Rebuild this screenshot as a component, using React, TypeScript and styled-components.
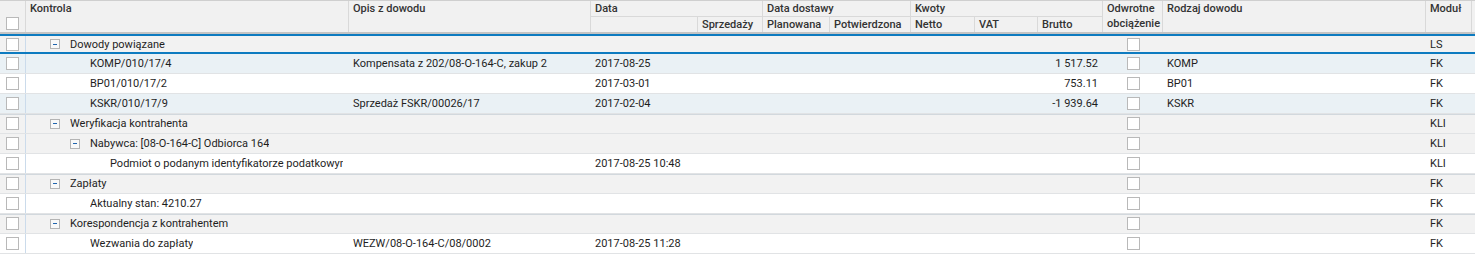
import React from 'react';
import styled, { createGlobalStyle, css } from 'styled-components';

const GlobalStyle = createGlobalStyle`
  html, body {
    margin: 0;
    padding: 0;
    background: #ffffff;
  }
  body {
    font-family: Roboto, "Liberation Sans", Arial, sans-serif;
    font-size: 11px;
    color: #1e1e1e;
  }
`;

const COLUMNS = '26px 323px 242px 107px 65px 67px 81px 64px 63px 65px 60px 263px 46px 1fr';

const Grid = styled.div`
  width: 1475px;
  overflow: hidden;
`;

const Header = styled.div`
  display: grid;
  grid-template-columns: ${COLUMNS};
  grid-template-rows: 16px 15px;
  background: #f1f1f1;
  border-top: 1px solid #cfcfcf;
  border-bottom: 2px solid #c4c4c4;
`;

const HeadCell = styled.div<{ $col: string; $row: string; $underline?: boolean }>`
  grid-column: ${p => p.$col};
  grid-row: ${p => p.$row};
  border-right: 1px solid #d9d9d9;
  ${p => p.$underline && css`border-bottom: 1px solid #d9d9d9;`}
  padding: 0 4px;
  line-height: 15px;
  font-weight: 500;
  color: #333;
  white-space: nowrap;
  overflow: hidden;
`;

const HeadCheckCell = styled(HeadCell)`
  display: flex;
  align-items: flex-end;
  justify-content: center;
  padding: 0 0 2px;
`;

const Row = styled.div<{ $group: boolean; $top: boolean; $tint: boolean; $selected: boolean }>`
  display: grid;
  grid-template-columns: ${COLUMNS};
  height: 19px;
  align-items: center;
  border-bottom: 1px solid #e1e3e5;
  background: ${p => (p.$group ? '#f2f2f2' : p.$tint ? '#eaf1f5' : '#ffffff')};
  ${p => p.$top && !p.$selected && css`box-shadow: inset 0 1px 0 #d2d8dd;`}
  ${p =>
    p.$selected &&
    css`
      height: 16px;
      border-top: 2px solid #0d7bc0;
      border-bottom: 2px solid #0d7bc0;
    `}
`;

const Cell = styled.div<{ $right?: boolean; $span?: number }>`
  height: 100%;
  display: flex;
  align-items: center;
  justify-content: ${p => (p.$right ? 'flex-end' : 'flex-start')};
  ${p => p.$span && css`grid-column: span ${p.$span};`}
  padding: 0 5px 0 4px;
  white-space: nowrap;
  overflow: hidden;
  min-width: 0;
`;

const CheckCell = styled.div<{ $divider?: boolean }>`
  height: 100%;
  display: flex;
  align-items: center;
  justify-content: center;
  ${p => p.$divider && css`border-right: 1px solid #cbdbeb;`}
`;

const Box = styled.span`
  display: inline-block;
  width: 11px;
  height: 11px;
  border: 1px solid #b9b9b9;
  background: #fff;
`;

// tree column: expander or spacer, then the label, indented 20px per level
const TreeCell = styled(Cell)<{ $depth: number }>`
  padding-left: ${p => 24 + p.$depth * 20}px;
  padding-right: 6px;
`;

const Label = styled.span`
  min-width: 0;
  overflow: hidden;
  white-space: nowrap;
`;

const Expander = styled.span`
  position: relative;
  flex: none;
  width: 8px;
  height: 8px;
  border: 1px solid #b4b4b4;
  background: #f8f8f8;
  margin-right: 10px;

  &::after {
    content: '';
    position: absolute;
    left: 2px;
    top: 3.5px;
    width: 4px;
    height: 1px;
    background: #1f64ad;
  }
`;

const Spacer = styled.span`
  flex: none;
  width: 20px;
`;

type Item = {
  group?: boolean;
  depth: number;
  label: string;
  opis?: string;
  data?: string;
  brutto?: string;
  rodzaj?: string;
  modul: string;
  tint?: boolean;
  selected?: boolean;
};

const rows: Item[] = [
  { group: true, depth: 0, label: 'Dowody powiązane', modul: 'LS', selected: true },
  { depth: 1, label: 'KOMP/010/17/4', opis: 'Kompensata z 202/08-O-164-C, zakup 2', data: '2017-08-25', brutto: '1 517.52', rodzaj: 'KOMP', modul: 'FK', tint: true },
  { depth: 1, label: 'BP01/010/17/2', data: '2017-03-01', brutto: '753.11', rodzaj: 'BP01', modul: 'FK' },
  { depth: 1, label: 'KSKR/010/17/9', opis: 'Sprzedaż FSKR/00026/17', data: '2017-02-04', brutto: '-1 939.64', rodzaj: 'KSKR', modul: 'FK', tint: true },
  { group: true, depth: 0, label: 'Weryfikacja kontrahenta', modul: 'KLI' },
  { group: true, depth: 1, label: 'Nabywca: [08-O-164-C] Odbiorca 164', modul: 'KLI' },
  { depth: 2, label: 'Podmiot o podanym identyfikatorze podatkowym', data: '2017-08-25 10:48', modul: 'KLI' },
  { group: true, depth: 0, label: 'Zapłaty', modul: 'FK' },
  { depth: 1, label: 'Aktualny stan: 4210.27', modul: 'FK' },
  { group: true, depth: 0, label: 'Korespondencja z kontrahentem', modul: 'FK' },
  { depth: 1, label: 'Wezwania do zapłaty', opis: 'WEZW/08-O-164-C/08/0002', data: '2017-08-25 11:28', modul: 'FK' },
];

const App: React.FC = () => {
  return (
    <>
      <GlobalStyle />
      <Grid>
        <Header>
          <HeadCheckCell $col="1" $row="1 / 3">
            <Box />
          </HeadCheckCell>
          <HeadCell $col="2" $row="1 / 3">Kontrola</HeadCell>
          <HeadCell $col="3" $row="1 / 3">Opis z dowodu</HeadCell>
          <HeadCell $col="4 / 6" $row="1" $underline>Data</HeadCell>
          <HeadCell $col="4" $row="2" />
          <HeadCell $col="5" $row="2">Sprzedaży</HeadCell>
          <HeadCell $col="6 / 8" $row="1" $underline>Data dostawy</HeadCell>
          <HeadCell $col="6" $row="2">Planowana</HeadCell>
          <HeadCell $col="7" $row="2">Potwierdzona</HeadCell>
          <HeadCell $col="8 / 11" $row="1" $underline>Kwoty</HeadCell>
          <HeadCell $col="8" $row="2">Netto</HeadCell>
          <HeadCell $col="9" $row="2">VAT</HeadCell>
          <HeadCell $col="10" $row="2">Brutto</HeadCell>
          <HeadCell $col="11" $row="1 / 3">
            Odwrotne
            <br />
            obciążenie
          </HeadCell>
          <HeadCell $col="12" $row="1 / 3">Rodzaj dowodu</HeadCell>
          <HeadCell $col="13" $row="1 / 3">Moduł</HeadCell>
          <HeadCell $col="14" $row="1 / 3" />
        </Header>

        {rows.map((r, i) => (
          <Row
            key={i}
            $group={!!r.group}
            $top={!!r.group && r.depth === 0}
            $tint={!!r.tint}
            $selected={!!r.selected}
          >
            <CheckCell $divider>
              <Box />
            </CheckCell>
            <TreeCell $depth={r.depth}>
              {r.group ? <Expander /> : <Spacer />}
              <Label>{r.label}</Label>
            </TreeCell>
            <Cell>{r.opis}</Cell>
            <Cell $span={2}>{r.data}</Cell>
            <Cell />
            <Cell />
            <Cell />
            <Cell />
            <Cell $right>{r.brutto}</Cell>
            <CheckCell>
              <Box />
            </CheckCell>
            <Cell>{r.rodzaj}</Cell>
            <Cell>{r.modul}</Cell>
            <Cell />
          </Row>
        ))}
      </Grid>
    </>
  );
};

export default App;
